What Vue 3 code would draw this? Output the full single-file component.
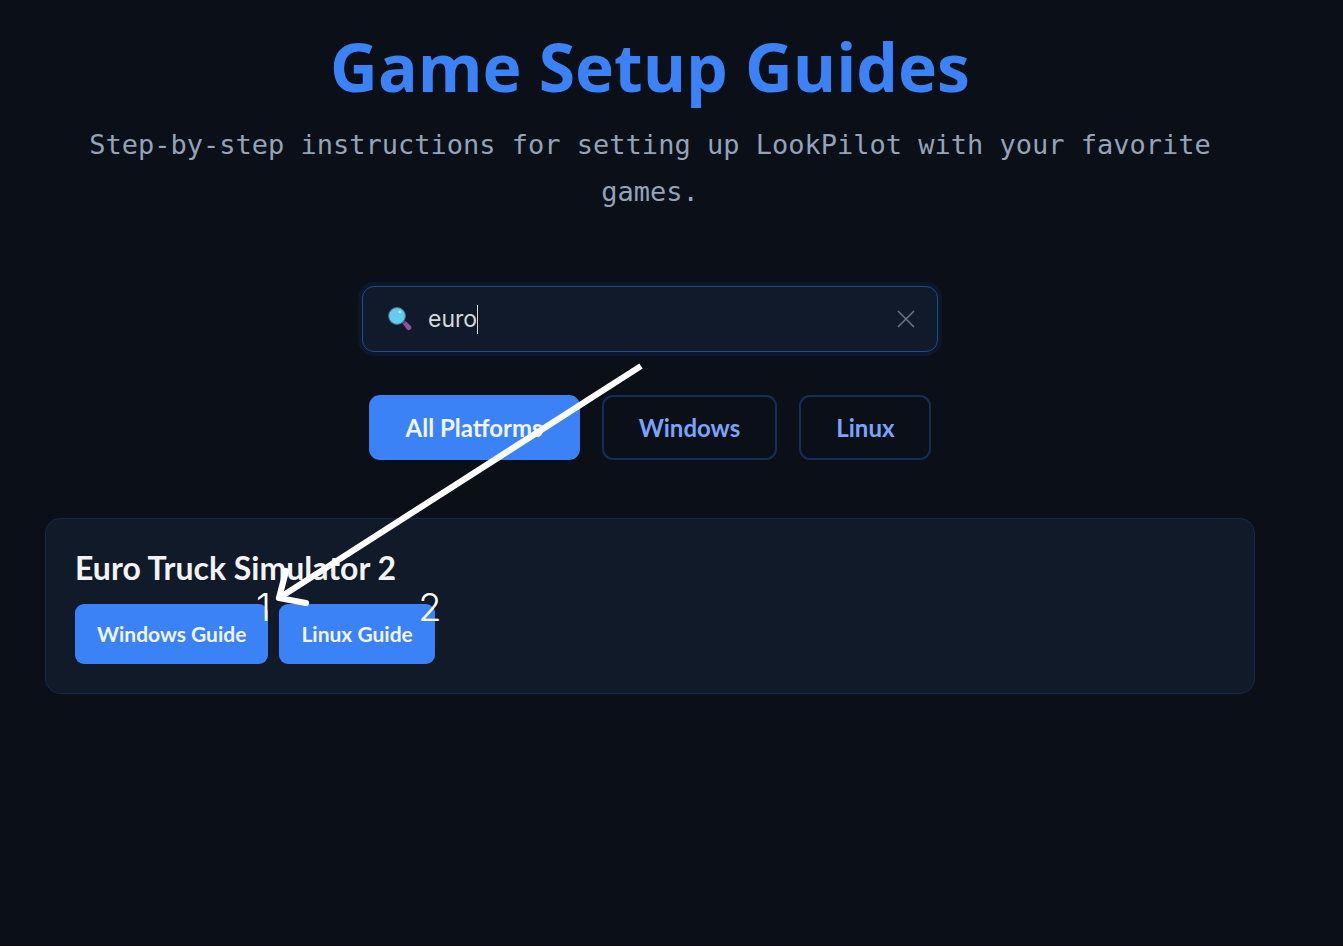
<script setup>
import { ref } from 'vue'

const query = ref('euro')
const platforms = ['All Platforms', 'Windows', 'Linux']
const active = ref('All Platforms')
const guides = [
  { label: 'Windows Guide', mark: '1' },
  { label: 'Linux Guide', mark: '2' },
]
</script>

<template>
  <main class="page">
    <header class="intro">
      <h1>Game Setup Guides</h1>
      <p>Step-by-step instructions for setting up LookPilot with your favorite games.</p>
    </header>

    <div class="search">
      <label class="field">
        <svg class="glass" viewBox="0 0 24 24" aria-hidden="true">
          <path d="M14.2 16l2.6-2.6 5.7 5.2a2.6 2.6 0 0 1-3.7 3.7z" fill="#8d5596" />
          <path d="M14 13l3 3" stroke="#4b4560" stroke-width="2.4" />
          <circle cx="9" cy="9" r="8.4" fill="#64cdec" stroke="#4a6a96" stroke-width="1" />
          <circle cx="11.8" cy="5" r="1.3" fill="#b9ecfb" />
        </svg>
        <input v-model="query" type="text" aria-label="Search games" />
        <span class="caret"></span>
      </label>
      <button class="clear" type="button" aria-label="Clear search" @click="query = ''">
        <svg viewBox="0 0 18 18" aria-hidden="true">
          <path d="M1 1l16 16M17 1L1 17" fill="none" stroke="#6b7482" stroke-width="1.6" />
        </svg>
      </button>
    </div>

    <div class="filters">
      <button
        v-for="p in platforms"
        :key="p"
        type="button"
        :class="{ active: active === p }"
        @click="active = p"
      >{{ p }}</button>
    </div>

    <section class="card">
      <h2>Euro Truck Simulator 2</h2>
      <div class="guides">
        <a v-for="g in guides" :key="g.label" href="#">
          {{ g.label }}
          <span class="mark">{{ g.mark }}</span>
        </a>
      </div>
      <svg class="arrow" viewBox="0 0 370 246" aria-hidden="true">
        <g fill="none" stroke="#fff" stroke-width="6.2">
          <path d="M366 4L4 236" />
          <path d="M11 209L4 236L31 241" stroke-linecap="round" stroke-linejoin="round" />
        </g>
      </svg>
    </section>
  </main>
</template>

<style>
body {
  background: #0a0f18;
}
</style>

<style scoped>
.page {
  box-sizing: border-box;
  min-height: 100vh;
  padding: 28px 88px 40px 45px;
  border-bottom: 1px solid #05070d;
  font-family: Lato, "Open Sans", sans-serif;
  background:
    linear-gradient(90deg, #0b111b 1px, transparent 1px) 51px 100% / 72px 150px repeat-x,
    #0a0f18;
}
.intro {
  text-align: center;
}
h1 {
  margin: 0;
  font-family: "Open Sans", sans-serif;
  font-size: 66px;
  line-height: 76px;
  font-weight: 700;
  color: #3b82f6;
}
.intro p {
  margin: 17px 0 0;
  font-family: "DejaVu Sans Mono", monospace;
  font-size: 27px;
  line-height: 47px;
  color: #94a3b8;
}
.search {
  box-sizing: border-box;
  display: flex;
  align-items: center;
  width: 576px;
  max-width: 100%;
  height: 66px;
  margin: 71px auto 0;
  padding: 0 20px 0 25px;
  border: 1px solid #234a8e;
  border-radius: 12px;
  background: #111a2a;
  box-shadow: 0 0 0 4px #0d172a;
}
.field {
  display: flex;
  flex: 1;
  align-items: center;
  cursor: text;
}
.glass {
  width: 24px;
  height: 24px;
  margin-right: 16px;
}
input {
  field-sizing: content;
  padding: 0;
  border: 0;
  outline: 0;
  background: none;
  font-family: Inter, sans-serif;
  font-size: 23px;
  line-height: 30px;
  color: #d6d8da;
}
.caret {
  width: 1px;
  height: 29px;
  background: #d6d8da;
}
.clear {
  display: flex;
  padding: 2px;
  border: 0;
  background: none;
  cursor: pointer;
}
.clear svg {
  width: 18px;
  height: 18px;
}
.filters {
  display: flex;
  flex-wrap: wrap;
  justify-content: center;
  gap: 22px;
  margin-top: 43px;
}
.filters button {
  height: 65px;
  padding: 0 35px;
  border: 2px solid #172d57;
  border-radius: 11px;
  background: none;
  font-family: inherit;
  font-size: 24px;
  font-weight: 700;
  color: #7ba3f8;
  cursor: pointer;
}
.filters .active {
  border-color: #3b82f6;
  background: #3b82f6;
  color: #f1f6fe;
}
.card {
  position: relative;
  margin-top: 58px;
  padding: 29px;
  border: 1px solid #16284a;
  border-radius: 15px;
  background: #111a29;
}
h2 {
  margin: 0 0 16px;
  font-size: 32px;
  line-height: 40px;
  font-weight: 700;
  color: #f1f3f6;
}
.guides {
  display: flex;
  flex-wrap: wrap;
  gap: 11px;
}
.guides a {
  position: relative;
  padding: 0 22px;
  border-radius: 9px;
  background: #3b82f6;
  font-size: 21px;
  line-height: 60px;
  font-weight: 700;
  color: #f1f6fe;
  text-decoration: none;
}
.mark {
  position: absolute;
  top: -20px;
  right: -7px;
  z-index: 1;
  width: 24px;
  text-align: center;
  font-family: Inter, sans-serif;
  font-size: 38px;
  line-height: 46px;
  font-weight: 300;
  color: #fff;
}
.arrow {
  position: absolute;
  left: 229px;
  top: -157px;
  width: 370px;
  height: 246px;
  pointer-events: none;
}
</style>
